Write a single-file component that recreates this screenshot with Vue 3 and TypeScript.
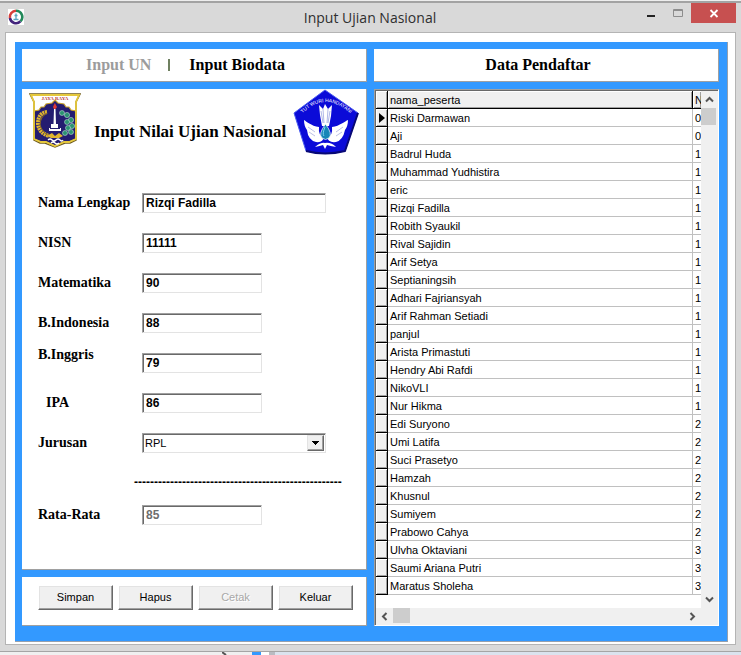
<script setup lang="ts">
import { ref } from 'vue'

interface Field {
  id: string
  label: string
  value: string
  wide?: boolean
  staggered?: boolean
  indented?: boolean
}

interface Row {
  name: string
  nisn: string
}

const fields = ref<Field[]>([
  { id: 'nama', label: 'Nama Lengkap', value: 'Rizqi Fadilla', wide: true },
  { id: 'nisn', label: 'NISN', value: '11111' },
  { id: 'matematika', label: 'Matematika', value: '90' },
  { id: 'indonesia', label: 'B.Indonesia', value: '88' },
  { id: 'inggris', label: 'B.Inggris', value: '79', staggered: true },
  { id: 'ipa', label: 'IPA', value: '86', indented: true },
])

const jurusan = ref('RPL')
const rata = ref('85')
const rule = '-'.repeat(52)
const selected = ref(0)

const group = (nisn: string, names: string[]): Row[] => names.map((name) => ({ name, nisn }))

const rows: Row[] = [
  ...group('0', ['Riski Darmawan', 'Aji']),
  ...group('1', [
    'Badrul Huda', 'Muhammad Yudhistira', 'eric', 'Rizqi Fadilla', 'Robith Syaukil',
    'Rival Sajidin', 'Arif Setya', 'Septianingsih', 'Adhari Fajriansyah',
    'Arif Rahman Setiadi', 'panjul', 'Arista Primastuti', 'Hendry Abi Rafdi',
    'NikoVLI', 'Nur Hikma',
  ]),
  ...group('2', [
    'Edi Suryono', 'Umi Latifa', 'Suci Prasetyo', 'Hamzah', 'Khusnul', 'Sumiyem',
    'Prabowo Cahya',
  ]),
  ...group('3', ['Ulvha Oktaviani', 'Saumi Ariana Putri', 'Maratus Sholeha']),
]
</script>

<template>
  <div class="screen">
    <main class="window">
      <header class="titlebar">
        <svg class="app-icon" viewBox="0 0 16 16" aria-hidden="true">
          <rect width="16" height="16" fill="#fff" />
          <g fill="none" stroke-width="2.6">
            <path d="M1.9 9A6.2 6.2 0 0 1 8 1.8" stroke="#d8403a" />
            <path d="M8 1.8A6.2 6.2 0 0 1 12.4 12.4" stroke="#23895a" />
            <path d="M12.4 12.4A6.2 6.2 0 0 1 1.9 9" stroke="#43247c" />
          </g>
          <path d="M8 4.5v6M6.5 6.5h3M5.5 10.500h5" stroke="#5aa6bd" stroke-width="1.3" fill="none" />
        </svg>
        <h1>Input Ujian Nasional</h1>
        <div class="controls">
          <button type="button" class="ctl" aria-label="Minimize">
            <svg width="30" height="20" viewBox="0 0 30 20"><path d="M10 13h8" stroke="#222" stroke-width="2" /></svg>
          </button>
          <button type="button" class="ctl" aria-label="Maximize">
            <svg width="24" height="20" viewBox="0 0 24 20"><path d="M6.500 6.500h9v7h-9zM6 7.500h10" stroke="#8d8d8d" fill="none" /></svg>
          </button>
          <button type="button" class="ctl close" aria-label="Close">
            <svg width="45" height="20" viewBox="0 0 45 20"><path d="M19.500 7l7 7M26.500 7l-7 7" stroke="#fff" stroke-width="1.800" /></svg>
          </button>
        </div>
      </header>

      <div class="client">
        <div class="board">
          <section class="column">
            <nav class="panel heading tabs">
              <button type="button" disabled>Input UN</button>
              <span class="divider"></span>
              <button type="button">Input Biodata</button>
            </nav>

            <form class="panel form" @submit.prevent>
              <div class="banner">
                <svg class="jaya" viewBox="0 0 52 56" aria-hidden="true">
                  <path d="M1 1H51L47 9V47L41 50H36L26 54L16 50H11L5 47V9Z" fill="#fff" stroke="#6f5c22" stroke-width="1.500" />
                  <path d="M5 18L10 17L12 14H15L17 11L23 10L26 7L29 10L35 11L37 14H40L42 17L47 18V46L40 49H35L26 53L17 49H12L5 46Z" fill="#241c70" stroke="#c9a22d" stroke-width="1.200" />
                  <path d="M2 2H50L47 9V46L40 49H35L26 53L17 49H12L5 46V9Z" fill="none" stroke="#e5c83c" stroke-width="1.800" />
                  <text x="26" y="7" text-anchor="middle" font-size="5" font-weight="bold" font-family="Liberation Serif, serif" fill="#b63535">JAYA RAYA</text>
                  <path d="M18 19Q9 20 9 31Q10 40 20 43" fill="none" stroke="#e0b52e" stroke-width="4" stroke-dasharray="2 .6" />
                  <path d="M18 20Q11 24 11 32Q13 39 20 43" fill="none" stroke="#8f6b18" />
                  <g fill="#2c9272" stroke="#d7eee2" stroke-width=".5">
                    <circle cx="33" cy="20" r="2.500" /><circle cx="38" cy="22" r="2.600" /><circle cx="42" cy="27" r="2.600" />
                    <circle cx="38" cy="29" r="2.500" /><circle cx="43" cy="33" r="2.600" /><circle cx="39" cy="35" r="2.500" />
                    <circle cx="42" cy="39" r="2.500" /><circle cx="36" cy="40" r="2.500" />
                  </g>
                  <path d="M25 16L24.500 31H22V35H20V38H32V35H29V31H27L26.500 16Z" fill="#fff" />
                  <path d="M25.800 10L28 14L26.500 16H25L24 14Z" fill="#e13a35" />
                  <path d="M21 35.500H31" stroke="#241c70" />
                  <path d="M18 43L23 40L26 43L30 40L34 43L30 45H22Z" fill="#e0b52e" />
                  <path d="M19 47q2-2 4 0t4 0t4 0t3 0M22 50q2-2 4 0t4 0" fill="none" stroke="#fff" stroke-width="1.300" />
                </svg>
                <h2>Input Nilai Ujian Nasional</h2>
                <svg class="tutwuri" viewBox="0 0 66 66" aria-hidden="true">
                  <defs>
                    <path id="motto" d="M7 27Q32 -1 60 27" />
                  </defs>
                  <path d="M32 1L65 24L52 62Q32 67 13 62L1 24Z" fill="#0b0bd8" stroke="#4a5cf0" stroke-width="1" />
                  <path d="M65 24L52 62Q32 67 13 62" fill="none" stroke="#080875" stroke-width="2" />
                  <text font-size="5" font-family="Liberation Sans, sans-serif" fill="#fff">
                    <textPath href="#motto" startOffset="50%" text-anchor="middle">TUT WURI HANDAYANI</textPath>
                  </text>
                  <path d="M29 37L27 26L26 16L30 20L32 15L35 20L39 16L38 27L36 37Z" fill="#fff" />
                  <path d="M30 20L31 34M35 20L34 34M28 22L30 34M37 22L35 34" stroke="#8f9bdc" stroke-width=".7" />
                  <path d="M26 38C18 37 13 32 11 31Q11 37 14 41Q15 51 23 53Q30 54 31 48Q25 47 26 38ZM39 38C47 37 52 32 55 31Q55 37 52 41Q50 51 43 53Q35 54 34 48Q40 47 39 38Z" fill="#fff" />
                  <path d="M15 38L22 43M16 43L22 47M50 38L43 43M49 43L43 47" stroke="#a9b0de" stroke-width=".8" />
                  <path d="M32.500 35Q40 45 36 49Q32.500 52 29 49Q25 45 32.500 35Z" fill="#1586b7" stroke="#fff" stroke-width=".7" />
                  <path d="M32 38Q29 45 31 47" stroke="#7bd3ee" fill="none" />
                  <path d="M22 58Q28 53 32 54Q38 53 43 58Q37 57 34 56L32 60L30 56Q27 57 22 58Z" fill="#fff" />
                </svg>
              </div>

              <div class="fields">
                <div v-for="f in fields" :key="f.id" class="field" :class="{ staggered: f.staggered }">
                  <label :for="f.id" :class="{ indented: f.indented }">{{ f.label }}</label>
                  <input :id="f.id" v-model="f.value" type="text" :class="{ wide: f.wide }" />
                </div>
                <div class="field">
                  <label for="jurusan">Jurusan</label>
                  <div class="combo">
                    <select id="jurusan" v-model="jurusan">
                      <option>RPL</option>
                    </select>
                    <span class="drop">
                      <svg width="7" height="4" viewBox="0 0 7 4" shape-rendering="crispEdges"><path d="M0 0h7L3.500 4z" fill="#000" /></svg>
                    </span>
                  </div>
                </div>
              </div>

              <p class="rule">{{ rule }}</p>

              <div class="field result">
                <label for="rata">Rata-Rata</label>
                <input id="rata" v-model="rata" type="text" disabled />
              </div>
            </form>

            <div class="panel actions">
              <button type="button">Simpan</button>
              <button type="button">Hapus</button>
              <button type="button" disabled>Cetak</button>
              <button type="button">Keluar</button>
            </div>
          </section>

          <section class="column">
            <div class="panel heading">
              <h2>Data Pendaftar</h2>
            </div>

            <div class="grid">
              <div class="sheet">
                <table>
                  <colgroup>
                    <col class="c-mark" />
                    <col />
                    <col class="c-nisn" />
                  </colgroup>
                  <thead>
                    <tr>
                      <th class="mark"></th>
                      <th>nama_peserta</th>
                      <th>N</th>
                    </tr>
                  </thead>
                  <tbody>
                    <tr v-for="(r, i) in rows" :key="i" @click="selected = i">
                      <td class="mark">
                        <svg v-if="selected === i" width="6" height="10" viewBox="0 0 6 10"><path d="M0 0l6 5l-6 5z" /></svg>
                      </td>
                      <td>{{ r.name }}</td>
                      <td>{{ r.nisn }}</td>
                    </tr>
                  </tbody>
                </table>
              </div>
              <div class="bar vertical">
                <button type="button" aria-label="Scroll up">
                  <svg width="9" height="7" viewBox="0 0 9 7"><path d="M1 5.500l3.500-3.500L8 5.500" /></svg>
                </button>
                <span class="thumb"></span>
                <button type="button" class="end" aria-label="Scroll down">
                  <svg width="9" height="7" viewBox="0 0 9 7"><path d="M1 1.500l3.500 3.500L8 1.500" /></svg>
                </button>
              </div>
              <div class="bar horizontal">
                <button type="button" aria-label="Scroll left">
                  <svg width="7" height="9" viewBox="0 0 7 9"><path d="M5.500 1L2 4.500L5.500 8" /></svg>
                </button>
                <span class="thumb"></span>
                <button type="button" class="end" aria-label="Scroll right">
                  <svg width="7" height="9" viewBox="0 0 7 9"><path d="M1.500 1L5 4.500L1.500 8" /></svg>
                </button>
              </div>
              <div class="corner"></div>
            </div>
          </section>
        </div>
      </div>
    </main>
    <div class="behind">
      <span class="behind-page">
        <svg width="8" height="3" viewBox="0 0 8 3"><path d="M0 0l4 3" stroke="#555" stroke-width="2" /></svg>
      </span>
      <span class="behind-mark"></span>
      <span class="behind-gap"></span>
      <span class="behind-app"></span>
    </div>
  </div>
</template>

<style>
body {
  margin: 0;
}
</style>

<style scoped>
* {
  box-sizing: border-box;
}

.screen {
  display: flex;
  flex-direction: column;
  min-height: 100vh;
  background: #d9d9d9;
  font-family: "Liberation Sans", Arial, sans-serif;
  font-size: 11px;
  color: #000;
}

h1,
h2,
p {
  margin: 0;
}

button {
  font: inherit;
  color: inherit;
}

.window {
  flex: 1;
  display: flex;
  flex-direction: column;
  padding: 0 5px 6px;
  border-top: 1px solid #eee;
  border-bottom: 1px solid #a5a5a5;
}

.titlebar {
  display: grid;
  grid-template-columns: 1fr auto 1fr;
  height: 31px;
  margin: 0 -5px;
  padding: 0 5px 0 8px;
  border-top: 2px solid #a3a3a3;
}

.app-icon {
  width: 16px;
  height: 16px;
  margin-top: 6px;
}

.titlebar h1 {
  padding-right: 4px;
  font: 400 14px/30px "Open Sans", "Noto Sans", sans-serif;
  color: #2f2f2f;
}

.controls {
  display: flex;
  justify-content: flex-end;
  align-items: flex-start;
}

.ctl {
  height: 20px;
  padding: 0;
  border: 0;
  background: none;
}

.ctl svg {
  display: block;
}

.ctl.close {
  background: #c75050;
}

.client {
  flex: 1;
  display: flex;
  padding: 9px 7px 2px 9px;
  border: 1px solid #b4b4b4;
  background: #fff;
}

.board {
  flex: 1;
  display: grid;
  grid-template-columns: minmax(0, 1fr) minmax(0, 1fr);
  gap: 7px;
  padding: 7px 8px 15px 7px;
  border-right: 1px solid #96a0ad;
  border-bottom: 1px solid #96a0ad;
  background: #3399ff;
}

.column {
  display: flex;
  flex-direction: column;
  gap: 7px;
}

.panel {
  border-right: 1px solid #a0a0a0;
  border-bottom: 1px solid #a0a0a0;
  background: #fff;
}

.heading {
  display: flex;
  align-items: center;
  justify-content: center;
  height: 33px;
}

.heading h2,
.tabs button,
.banner h2,
label {
  font-family: "Palatino Linotype", "Book Antiqua", "Liberation Serif", serif;
  font-weight: 700;
}

.heading h2,
.tabs button {
  font-size: 16px;
  line-height: 20px;
}

.heading h2 {
  margin-right: 16px;
}

.tabs {
  justify-content: flex-start;
  padding-left: 64px;
}

.tabs button {
  padding: 0;
  border: 0;
  background: none;
}

.tabs button:disabled {
  color: #9c9c9c;
}

.divider {
  width: 2px;
  height: 12px;
  margin: 0 19px 0 17px;
  background: #6f8060;
}

.form {
  flex: 1;
  padding-bottom: 44px;
}

.banner {
  display: flex;
  height: 104px;
  padding-left: 7px;
}

.jaya {
  width: 52px;
  height: 56px;
  margin-top: 4px;
}

.tutwuri {
  width: 66px;
  height: 66px;
}

.banner h2 {
  width: 212px;
  padding-left: 13px;
  font-size: 17px;
  line-height: 86px;
  white-space: nowrap;
}

.fields {
  display: flex;
  flex-direction: column;
  gap: 20px;
  padding-left: 16px;
}

.field {
  display: grid;
  grid-template-columns: 104px auto;
  justify-content: start;
  align-items: center;
}

.field.staggered {
  height: 28px;
  margin-top: -8px;
  align-items: start;
}

.staggered input {
  align-self: end;
}

label {
  font-size: 14px;
  line-height: 20px;
}

label.indented {
  padding-left: 8px;
}

.field input,
.combo {
  width: 120px;
  height: 20px;
  padding: 0 1px;
  border: 1px solid;
  border-color: #a0a0a0 #e3e3e3 #e3e3e3 #a0a0a0;
  border-radius: 0;
  background: #fff;
  box-shadow: inset 1px 1px 0 #696969;
}

.field input {
  padding: 0 3px 1px;
  font: 700 12px/17px "Liberation Sans", Arial, sans-serif;
  color: #000;
}

.field input:disabled {
  color: #6d6d6d;
}

.field input.wide,
.combo {
  width: 184px;
}

.combo {
  display: flex;
  padding: 1px;
}

.combo select {
  flex: 1;
  min-width: 0;
  padding: 0 1px;
  border: 0;
  appearance: none;
  background: transparent;
  font: 400 11px/16px "Liberation Sans", Arial, sans-serif;
  color: #000;
}

.drop {
  display: grid;
  place-items: center;
  width: 17px;
  border: 1px solid;
  border-color: #e3e3e3 #696969 #696969 #e3e3e3;
  background: #f0f0f0;
  box-shadow: inset -1px -1px 0 #a0a0a0;
}

.rule {
  margin-top: 20px;
  padding-left: 112px;
  font-size: 12px;
  font-weight: 700;
  line-height: 18px;
  white-space: nowrap;
}

.result {
  margin-top: 14px;
  padding-left: 16px;
}

.actions {
  display: flex;
  gap: 5px;
  height: 49px;
  padding: 8px 12px 0 16px;
}

.actions button {
  width: 75px;
  height: 25px;
  padding: 0 0 1px;
  border: 1px solid;
  border-color: #fff #696969 #696969 #fff;
  background: #f0f0f0;
  box-shadow: inset -1px -1px 0 #a0a0a0, inset 1px 1px 0 #e3e3e3;
}

.actions button:disabled {
  color: #a8a8a8;
  text-shadow: 1px 1px 0 #fff;
}

.grid {
  flex: 1;
  display: grid;
  grid-template-columns: minmax(0, 1fr) 17px;
  grid-template-rows: 1fr 17px;
  border: 1px solid;
  border-color: #a0a0a0 #fff #fff #a0a0a0;
  background: #fff;
  box-shadow: inset 1px 1px 0 #696969;
  padding: 1px 0 0 1px;
}

.sheet {
  overflow: hidden;
}

table {
  width: 100%;
  table-layout: fixed;
  border-collapse: separate;
  border-spacing: 0;
}

.c-mark {
  width: 12px;
}

.c-nisn {
  width: 8px;
}

th,
td {
  height: 18px;
  padding: 1px 0 0 2px;
  overflow: hidden;
  border-right: 1px solid #c0c0c0;
  border-bottom: 1px solid #c0c0c0;
  font-weight: 400;
  line-height: 16px;
  text-align: left;
  white-space: nowrap;
  text-overflow: clip;
}

th {
  border-color: #000;
  background: #f0f0f0;
  box-shadow: inset 1px 1px 0 #fff, inset -1px -1px 0 #a0a0a0;
}

th:last-child,
td:last-child {
  border-right: 0;
}

.mark {
  padding-left: 3px;
  border-color: #000;
  background: #f0f0f0;
  box-shadow: inset 1px 1px 0 #fff, inset -1px -1px 0 #a0a0a0;
}

.mark svg {
  display: block;
}

.bar {
  display: flex;
  background: #f0f0f0;
}

.vertical {
  flex-direction: column;
}

.bar button {
  display: grid;
  place-items: center;
  width: 17px;
  height: 17px;
  padding: 0;
  border: 0;
  background: none;
}

.bar path {
  fill: none;
  stroke: #555;
  stroke-width: 2;
}

.bar .end {
  margin-top: auto;
}

.horizontal .end {
  margin: 0 0 0 auto;
}

.thumb {
  width: 15px;
  height: 17px;
  background: #cdcdcd;
}

.horizontal .thumb {
  width: 17px;
  height: 15px;
}

.corner {
  background: #f0f0f0;
}

.behind {
  display: flex;
  height: 3px;
  background: #dbe3ee;
}

.behind-page {
  display: flex;
  justify-content: flex-end;
  width: 34%;
  padding-right: 22px;
  background: #f0f0f0;
}

.behind-mark {
  width: 9px;
  background: #3399ff;
}

.behind-gap {
  width: 8px;
  background: #fff;
}

.behind-app {
  width: 6px;
  background: #b9bcc2;
}
</style>
